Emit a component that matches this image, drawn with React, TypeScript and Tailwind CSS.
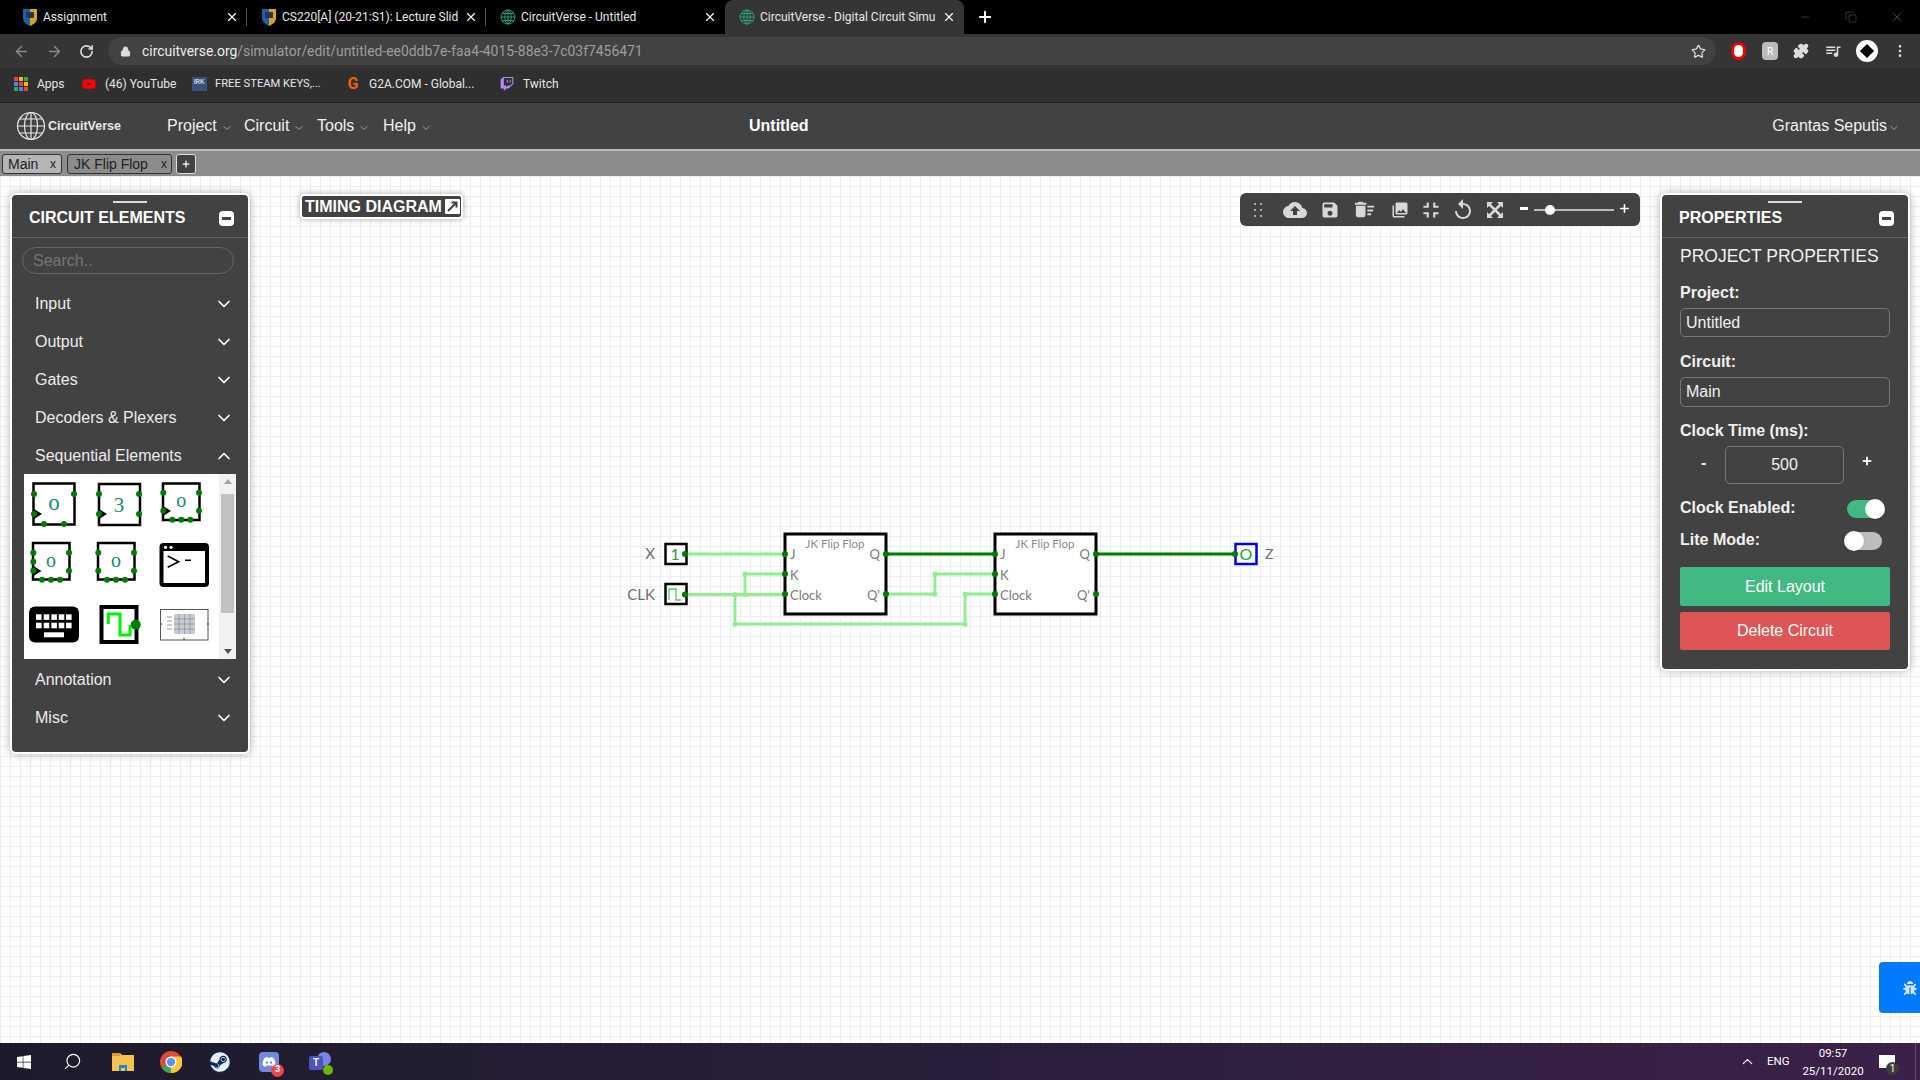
import { ChevronDown, ChevronUp, ArrowLeft, ArrowRight, RotateCw, Lock, Star, Puzzle, X, Plus, Minus, Search, MoreVertical, Copy } from "lucide-react";
import { MdCloudUpload, MdSave, MdDeleteSweep, MdPhotoLibrary, MdFullscreenExit, MdReplay, MdQueueMusic } from "react-icons/md";
import { FaBug, FaDiscord, FaSteam, FaTwitch, FaWindows, FaYoutube } from "react-icons/fa";

const Globe = () => (
  <svg width="16" height="16" viewBox="0 0 16 16" fill="none" stroke="#2f9e78" strokeWidth="1">
    <circle cx="8" cy="8" r="7" />
    <ellipse cx="8" cy="8" rx="3.2" ry="7" />
    <path d="M1 8h14M2 4.5h12M2 11.5h12M8 1v14" />
  </svg>
);

const Shield = () => (
  <svg width="14" height="17" viewBox="0 0 14 17">
    <path d="M0 0h7v17C3 15 0 13 0 9z" fill="#1f5fa8" />
    <path d="M7 0h7v9c0 4-3 6-7 8z" fill="#d9a520" />
    <path d="M3 3h8v6H3z" fill="#29344f" />
  </svg>
);

const BrowserTab = ({ title, icon, active, sep }: { title: string; icon: React.ReactNode; active?: boolean; sep?: boolean }) => (
  <div className={`relative flex h-[34px] w-[239px] shrink-0 items-center pl-[13px] pr-[8px] ${active ? "rounded-t-lg bg-[#353535]" : ""}`}>
    <div className="flex w-[17px] shrink-0 justify-center">{icon}</div>
    <span className="ml-[5px] flex-1 whitespace-nowrap text-xs text-[#e8e8e8]">{title}</span>
    <X size={14} className="shrink-0 text-white" />
    {sep && <div className="absolute right-0 top-[8px] h-[18px] w-px bg-[#555]" />}
  </div>
);

const AppsIcon = () => (
  <div className="grid grid-cols-3 gap-[1.5px]">
    {["#ea4335", "#fbbc05", "#34a853", "#4285f4", "#ea4335", "#fbbc05", "#34a853", "#4285f4", "#ea4335"].map((c, i) => (
      <div key={i} className="h-[3.5px] w-[3.5px]" style={{ background: c }} />
    ))}
  </div>
);

const Bookmark = ({ icon, label, width, small }: { icon: React.ReactNode; label: string; width: string; small?: boolean }) => (
  <div className={`flex shrink-0 items-center ${width}`}>
    <div className="flex w-4 shrink-0 justify-center">{icon}</div>
    <span className={`ml-[8px] whitespace-nowrap text-[#e6e6e6] ${small ? "text-[11.2px]" : "text-xs"}`}>{label}</span>
  </div>
);

const NavMenu = ({ label, width }: { label: string; width: string }) => (
  <div className={`flex shrink-0 items-center ${width}`}>
    <span className="text-base text-[#f0f0f0]">{label}</span>
    <ChevronDown size={12} strokeWidth={1.25} className="ml-[4px] mt-[3px] text-[#cfcfcf]" />
  </div>
);

const CategoryRow = ({ label, open }: { label: string; open?: boolean }) => (
  <div className="flex h-[38px] items-center justify-between pl-[23px] pr-[14px]">
    <span className="text-base text-[#ececec]">{label}</span>
    {open ? <ChevronUp size={20} className="text-white" /> : <ChevronDown size={20} className="text-white" />}
  </div>
);

const MinimizeButton = () => (
  <div className="flex h-[15px] w-[15px] items-center justify-center rounded-sm bg-white">
    <div className="h-[3px] w-[9px] bg-[#424242]" />
  </div>
);

type SeqProps = { x: number; y: number; s: number; nodes: [number, number][]; digit: string; dx: number; dy: number; size: number; clock?: [number, number] };

const SeqIcon = ({ x, y, s, nodes, digit, dx, dy, size, clock }: SeqProps) => (
  <g>
    <rect x={x} y={y} width={s} height={s} fill="#fff" stroke="#000" strokeWidth="2.5" />
    {clock && <path d={`M${clock[0]} ${clock[1] - 5}L${clock[0] + 8} ${clock[1]}L${clock[0]} ${clock[1] + 5}`} fill="#000" />}
    <text x={dx} y={dy} fontSize={size} textAnchor="middle" dominantBaseline="central" fontFamily="'Liberation Serif', serif" fill="#158a78">{digit}</text>
    {nodes.map(([cx, cy], i) => (
      <circle key={i} cx={cx} cy={cy} r="3" fill="#007a00" />
    ))}
  </g>
);

const Palette = () => (
  <svg width="195" height="185" viewBox="0 0 195 185" className="shrink-0">
    <SeqIcon x={9.5} y={9.5} s={41} digit="o" dx={30} dy={28} size={23} clock={[10, 40]} nodes={[[10, 20], [50, 20], [10, 40], [20, 50], [40, 50]]} />
    <SeqIcon x={75} y={10} s={41} digit="3" dx={95} dy={31} size={21} clock={[75, 40]} nodes={[[75, 20], [115, 20], [75, 40], [115, 40]]} />
    <SeqIcon x={139} y={9.5} s={36.5} digit="o" dx={157.3} dy={26} size={20} clock={[139, 37]} nodes={[[139.3, 18.7], [175, 18.7], [139.3, 36.7], [175, 36.7], [148.3, 45.7], [157.3, 45.7], [166.3, 45.7]]} />
    <SeqIcon x={9} y={69} s={36.5} digit="o" dx={27} dy={86} size={20} clock={[9.5, 97]} nodes={[[9.3, 78.7], [9.3, 87.7], [9.3, 96.7], [45, 78.7], [45, 96.7], [18, 105.7], [27, 105.7], [36, 105.7]]} />
    <SeqIcon x={74} y={69} s={36.5} digit="o" dx={92} dy={86} size={20} nodes={[[74.3, 78.7], [74.3, 96.7], [110, 78.7], [110, 96.7], [83, 105.7], [92, 105.7], [101, 105.7]]} />
    <rect x="135.5" y="69" width="49.5" height="44" rx="4" fill="#000" />
    <rect x="139.5" y="77" width="41.5" height="32" fill="#fff" />
    <circle cx="141.5" cy="73.3" r="1.6" fill="#fff" />
    <circle cx="147" cy="73.3" r="1.6" fill="#fff" />
    <path d="M143.7 82L154.7 87.7L143.7 93.3" fill="none" stroke="#000" strokeWidth="1.6" />
    <path d="M161 86.3h6" stroke="#000" strokeWidth="1.6" />
    <rect x="5" y="132.5" width="50" height="36" rx="6" fill="#000" />
    {[12, 19.7, 27.3, 34.7, 42].map((kx) => (
      <g key={kx}>
        <rect x={kx} y="140.3" width="5.6" height="5.6" fill="#fff" />
        <rect x={kx} y="148.7" width="5.6" height="5.6" fill="#fff" />
      </g>
    ))}
    <rect x="20" y="158.3" width="20" height="5" fill="#fff" />
    <rect x="77.5" y="133" width="35" height="35" fill="#fff" stroke="#000" strokeWidth="4" />
    <path d="M84.3 150V140H96V161H106V151" fill="none" stroke="#00f000" strokeWidth="3" />
    <circle cx="111.7" cy="150.7" r="5" fill="#007a00" />
    <rect x="136.5" y="135.5" width="47.5" height="30.5" fill="#fff" stroke="#555" strokeWidth="1" />
    <rect x="150" y="140" width="21" height="20" fill="#c8ccd4" />
    <path d="M155 140v20M160.5 140v20M166 140v20M150 145h21M150 150h21M150 155h21" stroke="#8b8b96" strokeWidth=".7" />
    <path d="M143 143h5M143 147h5M143 151h5M143 155h5" stroke="#9a9aa6" strokeWidth="1.2" />
    <circle cx="160" cy="165" r="1" fill="#00a000" />
    <circle cx="137" cy="150" r="1" fill="#00a000" />
    <circle cx="184" cy="150" r="1" fill="#00a000" />
  </svg>
);

const Wire = ({ d, on }: { d: string; on?: boolean }) => (
  <path d={d} fill="none" stroke={on ? "#007a00" : "#90ee90"} strokeWidth="2.800" />
);

const FlipFlop = ({ x }: { x: number }) => (
  <g fontFamily="Lato, sans-serif" fill="#7a7a7a">
    <rect x={x} y="534" width="101" height="80" fill="#fff" stroke="#000" strokeWidth="3" />
    <text x={x + 50} y="548" fontSize="11.5" textAnchor="middle" fill="#8a8a8a">JK Flip Flop</text>
    <text x={x + 5} y="559" fontSize="13">J</text>
    <text x={x + 5} y="580" fontSize="13">K</text>
    <text x={x + 5} y="600" fontSize="13">Clock</text>
    <text x={x + 95} y="559" fontSize="13" textAnchor="end">Q</text>
    <text x={x + 95} y="600" fontSize="13" textAnchor="end">Q'</text>
    {[[x, 554], [x, 574], [x, 594], [x + 101, 554], [x + 101, 594]].map(([cx, cy], i) => (
      <circle key={i} cx={cx} cy={cy} r="3" fill="#007a00" />
    ))}
  </g>
);

const Circuit = () => (
  <svg width="660" height="130" viewBox="620 515 660 130" className="absolute left-[620px] top-[339px]">
    <Wire d="M685 554H785" />
    <Wire d="M685 594.500H785" />
    <Wire d="M745 574V594M745 574H785" />
    <Wire d="M735 594V624H965V594H995" />
    <Wire d="M885 594H935V574H995" />
    <Wire d="M885 554H995" on />
    <Wire d="M1096 554H1235" on />
    <FlipFlop x={785} />
    <FlipFlop x={995} />
    {[[745, 574], [745, 594.5], [735, 594.5], [735, 624], [965, 624], [965, 594], [935, 594], [935, 574]].map(([cx, cy], i) => (
      <circle key={i} cx={cx} cy={cy} r="2.500" fill="#90ee90" />
    ))}
    <g fontFamily="Lato, sans-serif">
      <text x="655" y="559" fontSize="15" textAnchor="end" fill="#6e6e6e">X</text>
      <text x="655" y="600" fontSize="15" textAnchor="end" fill="#6e6e6e">CLK</text>
      <rect x="665.500" y="544" width="21" height="20" fill="#fff" stroke="#000" strokeWidth="2.500" />
      <text x="675" y="560" fontSize="15" textAnchor="middle" fill="#1f9a3b">1</text>
      <circle cx="685" cy="554" r="3" fill="#007a00" />
      <rect x="665.500" y="584" width="21" height="20" fill="#fff" stroke="#000" strokeWidth="2.500" />
      <path d="M669 600V589H676V600H681" fill="none" stroke="#55c56a" strokeWidth="1.300" />
      <circle cx="685" cy="594.500" r="3" fill="#007a00" />
      <rect x="1235.500" y="544" width="21" height="20" fill="#fff" stroke="#0000e6" strokeWidth="2.500" />
      <text x="1246" y="560" fontSize="16" textAnchor="middle" fill="#1f9a3b">O</text>
      <circle cx="1235" cy="554" r="3" fill="#007a00" />
      <text x="1265" y="559" fontSize="14" fill="#6e6e6e">Z</text>
    </g>
  </svg>
);

const Toggle = ({ on }: { on?: boolean }) => (
  <div className={`relative mt-[2px] h-[18px] w-[35px] rounded-full ${on ? "bg-[#42b983]" : "bg-[#bdbdbd]"}`}>
    <div className={`absolute top-[-1px] h-5 w-5 rounded-full bg-white shadow ${on ? "right-[-3px]" : "left-[-3px]"}`} />
  </div>
);

const ToolSlot = ({ className, children }: { className: string; children: React.ReactNode }) => (
  <div className={`flex w-5 shrink-0 justify-center text-[#d8d8d8] ${className}`}>{children}</div>
);

const Toolbar = () => (
  <div className="absolute left-[1240px] top-[17px] flex h-[33px] w-[400px] items-center rounded-md bg-[#424242]">
    <ToolSlot className="ml-2">
      <div className="grid grid-cols-2 gap-x-[4px] gap-y-[4px]">
        {[0, 1, 2, 3, 4, 5].map((i) => <div key={i} className="h-[2px] w-[2px] bg-[#aaa]" />)}
      </div>
    </ToolSlot>
    <ToolSlot className="ml-[17px]"><MdCloudUpload size={24} className="shrink-0" /></ToolSlot>
    <ToolSlot className="ml-[15px]"><MdSave size={20} className="shrink-0" /></ToolSlot>
    <ToolSlot className="ml-[14px]"><MdDeleteSweep size={23} className="shrink-0" /></ToolSlot>
    <ToolSlot className="ml-[16px]"><MdPhotoLibrary size={18} className="shrink-0" /></ToolSlot>
    <ToolSlot className="ml-[11px]"><MdFullscreenExit size={26} className="shrink-0" /></ToolSlot>
    <ToolSlot className="ml-[12px]"><MdReplay size={24} className="shrink-0" /></ToolSlot>
    <ToolSlot className="ml-[12px]">
      <svg width="16" height="16" viewBox="0 0 16 16" className="shrink-0">
        <path d="M0 0H6L0 6ZM16 0V6L10 0ZM0 16V10L6 16ZM16 16H10L16 10Z" fill="currentColor" />
        <path d="M2 2L14 14M14 2L2 14" stroke="currentColor" strokeWidth="2.500" />
      </svg>
    </ToolSlot>
    <div className="ml-[15px] mb-[2px] h-[3px] w-[8px] bg-white" />
    <div className="relative ml-[6px] h-[2px] w-[80px] bg-[#bbb]">
      <div className="absolute left-[11px] top-[-4px] h-[10px] w-[10px] rounded-full bg-white" />
    </div>
    <Plus size={13} strokeWidth={3} className="mb-[3px] ml-[4px] text-white" />
  </div>
);

export default function App() {
  return (
    <div className="flex h-[1080px] w-[1920px] flex-col overflow-hidden bg-white font-['Liberation_Sans',Arial,sans-serif]">
      <div className="flex h-[34px] shrink-0 items-center bg-black font-['Roboto',sans-serif]">
        <div className="w-[8px] shrink-0" />
        <BrowserTab title="Assignment" icon={<Shield />} sep />
        <BrowserTab title="CS220[A] (20-21:S1): Lecture Slid" icon={<Shield />} sep />
        <BrowserTab title="CircuitVerse - Untitled" icon={<Globe />} />
        <BrowserTab title="CircuitVerse - Digital Circuit Simu" icon={<Globe />} active />
        <Plus size={18} strokeWidth={2.5} className="ml-[12px] text-white" />
        <Minus size={12} strokeWidth={1} className="ml-auto text-[#666]" />
        <Copy size={12} strokeWidth={1} className="ml-[34px] text-[#666]" />
        <X size={14} strokeWidth={1} className="ml-[33px] mr-[16px] text-[#777]" />
      </div>
      <div className="flex h-[34px] shrink-0 items-center bg-[#353535] font-['Roboto',sans-serif]">
        <ArrowLeft size={17} className="ml-[13px] text-[#8a8a8a]" />
        <ArrowRight size={17} className="ml-[16px] text-[#8a8a8a]" />
        <RotateCw size={15} strokeWidth={2.5} className="ml-[16px] text-[#e0e0e0]" />
        <div className="ml-[14px] flex h-7 w-[1608px] items-center rounded-full bg-[#424242] pl-[12px]">
          <Lock size={11} fill="#ddd" className="text-[#ddd]" />
          <span className="ml-[11px] text-[13.9px] text-[#9e9e9e]"><span className="text-[#ececec]">circuitverse.org</span>/simulator/edit/untitled-ee0ddb7e-faa4-4015-88e3-7c03f7456471</span>
          <Star size={15} className="ml-auto mr-[10px] text-[#ddd]" />
        </div>
        <div className="ml-[15px] h-[18px] w-[15px] rounded-full border-[3px] border-[#e00] bg-white" />
        <div className="ml-4 flex h-[18px] w-[16px] items-center justify-center rounded-sm bg-[#bbb] text-[10px] text-white">R</div>
        <Puzzle size={16} fill="#ddd" className="ml-[15px] text-[#ddd]" />
        <MdQueueMusic size={18} className="ml-[15px] text-[#ddd]" />
        <div className="ml-[14px] flex h-[22px] w-[22px] items-center justify-center rounded-full bg-white"><div className="h-[10px] w-[10px] rotate-45 bg-black" /></div>
        <MoreVertical size={16} className="ml-[14px] text-[#ddd]" />
      </div>
      <div className="flex h-[35px] shrink-0 items-center border-b border-[#1f1f1f] bg-[#2f2f2f] pb-[2px] pl-[13px] font-['Roboto',sans-serif]">
        <Bookmark width="w-[68px]" label="Apps" icon={<AppsIcon />} />
        <Bookmark width="w-[110px]" label="(46) YouTube" icon={<FaYoutube size={14} className="text-[#f00]" />} />
        <Bookmark width="w-[154px]" small label="FREE STEAM KEYS,..." icon={<div className="h-[14px] w-[15px] bg-[#3c4f7c] text-center text-[7px] text-white">IRK</div>} />
        <Bookmark width="w-[154px]" label="G2A.COM - Global..." icon={<span className="text-base font-bold leading-4 text-[#f05f00]">G</span>} />
        <Bookmark width="w-[60px]" label="Twitch" icon={<FaTwitch size={14} className="text-[#b58aff]" />} />
      </div>
      <div className="flex h-[46px] shrink-0 items-center bg-[#424242] pl-4">
        <svg width="30" height="30" viewBox="0 0 30 30" fill="none" stroke="#e8e8e8" strokeWidth="1.2" className="shrink-0">
          <circle cx="15" cy="15" r="13.500" />
          <ellipse cx="15" cy="15" rx="6.500" ry="13.500" />
          <path d="M1.500 15H28.500M3.500 8H26.500M3.500 22H26.500M15 1.500V28.500" />
        </svg>
        <span className="ml-[2px] w-[119px] shrink-0 text-[12.5px] font-bold text-[#e8e8e8]">CircuitVerse</span>
        <NavMenu width="w-[77px]" label="Project" />
        <NavMenu width="w-[73px]" label="Circuit" />
        <NavMenu width="w-[66px]" label="Tools" />
        <NavMenu width="w-[366px]" label="Help" />
        <span className="text-base font-bold text-white">Untitled</span>
        <div className="ml-auto mr-[20px] flex items-center">
          <span className="text-base text-[#f0f0f0]">Grantas Seputis</span>
          <ChevronDown size={12} strokeWidth={1.25} className="ml-[1px] mt-[3px] text-[#cfcfcf]" />
        </div>
      </div>
      <div className="flex h-[27px] shrink-0 items-center border-t-2 border-[#bbb] bg-[#8c8c8c] pl-[2px]">
        <div className="flex h-5 w-[60px] items-center justify-between rounded-[3px] border border-[#333] bg-[#b5b5b5] px-[5px] text-sm text-[#222]">
          <span>Main</span><span className="text-xs">x</span>
        </div>
        <div className="ml-[5px] flex h-5 w-[105px] items-center justify-between rounded-[3px] border border-[#333] bg-[#8c8c8c] pl-[6px] pr-[4px] text-sm text-[#222]">
          <span>JK Flip Flop</span><span className="text-xs">x</span>
        </div>
        <div className="ml-[4px] flex h-5 w-[20px] items-center justify-center rounded-[3px] border border-[#ddd] bg-[#424242]">
          <Plus size={10} strokeWidth={3} className="text-white" />
        </div>
      </div>
      <div className="relative flex-1 bg-white bg-[linear-gradient(#eeeeee_1px,transparent_1px),linear-gradient(90deg,#eeeeee_1px,transparent_1px)] bg-[size:10px_10px]">
        <div className="absolute left-[10px] top-[17px] h-[561px] w-[240px] rounded-[6px] border-2 border-white bg-[#424242] shadow-[0_0_10px_rgba(0,0,0,0.3)]">
          <div className="relative flex h-[43px] items-center justify-between border-b border-[#666] pl-[17px] pr-[14px]">
            <div className="absolute left-[101px] top-[6px] h-[2px] w-[34px] bg-[#ddd]" />
            <span className="mt-[4px] text-base font-bold text-white">CIRCUIT ELEMENTS</span>
            <div className="mt-[4px]"><MinimizeButton /></div>
          </div>
          <div className="mx-[10px] mt-[9px] flex h-[27px] w-[212px] items-center rounded-full border border-[#666] pl-[10px]">
            <input readOnly placeholder="Search.." className="w-full bg-transparent text-base outline-none placeholder:text-[#757575]" />
          </div>
          <div className="mt-[11px]">
            <CategoryRow label="Input" />
            <CategoryRow label="Output" />
            <CategoryRow label="Gates" />
            <CategoryRow label="Decoders & Plexers" />
            <CategoryRow label="Sequential Elements" open />
          </div>
          <div className="mx-[12px] -mt-px flex h-[185px] w-[212px] bg-white">
            <Palette />
            <div className="flex w-[17px] shrink-0 flex-col items-center justify-between bg-[#f1f1f1] py-[5px]">
              <div className="h-0 w-0 border-x-[4px] border-b-[5px] border-x-transparent border-b-[#a3a3a3]" />
              <div className="absolute top-[299px] h-[119px] w-[13px] bg-[#c1c1c1]" />
              <div className="h-0 w-0 border-x-[4px] border-t-[5px] border-x-transparent border-t-[#505050]" />
            </div>
          </div>
          <div className="mt-[2px]">
            <CategoryRow label="Annotation" />
            <CategoryRow label="Misc" />
          </div>
        </div>

        <div className="absolute left-[300px] top-[18px] flex h-[25px] w-[163px] items-center justify-between rounded-[4px] border-2 border-white bg-[#424242] pl-[3px] pr-[1px] shadow-[0_0_6px_rgba(0,0,0,0.35)]">
          <span className="text-base font-bold text-white">TIMING DIAGRAM</span>
          <svg width="15" height="15" viewBox="0 0 15 15" className="shrink-0">
            <rect width="15" height="15" rx="1" fill="#fff" />
            <path d="M3 12L10.500 4.500M6.500 3.500H11.500V8.500" fill="none" stroke="#424242" strokeWidth="2" />
          </svg>
        </div>

        <Toolbar />
        <Circuit />

        <div className="absolute left-[1660px] top-[17px] h-[478px] w-[250px] rounded-[6px] border-2 border-white bg-[#424242] shadow-[0_0_10px_rgba(0,0,0,0.3)]">
          <div className="relative flex h-[43px] items-center justify-between border-b border-[#666] pl-[17px] pr-[14px]">
            <div className="absolute left-[106px] top-[6px] h-[2px] w-[34px] bg-[#ddd]" />
            <span className="mt-[4px] text-base font-bold text-white">PROPERTIES</span>
            <div className="mt-[4px]"><MinimizeButton /></div>
          </div>
          <div className="px-[18px] text-[#f0f0f0]">
            <div className="mt-[6px] h-6 text-[17.500px] leading-6">PROJECT PROPERTIES</div>
            <div className="mt-[15px] h-5 text-base font-bold leading-5">Project:</div>
            <input readOnly value="Untitled" className="mt-[5px] h-[29px] w-[210px] rounded-[5px] border border-[#777] bg-transparent px-[5px] text-base outline-none" />
            <div className="mt-[15px] h-5 text-base font-bold leading-5">Circuit:</div>
            <input readOnly value="Main" className="mt-[5px] h-[30px] w-[210px] rounded-[5px] border border-[#777] bg-transparent px-[5px] text-base outline-none" />
            <div className="mt-[14px] h-5 text-base font-bold leading-5">Clock Time (ms):</div>
            <div className="mt-[5px] flex h-[38px] items-center">
              <span className="ml-[21px] mb-1 w-6 text-base font-bold">-</span>
              <input readOnly value="500" className="h-[38px] w-[119px] rounded-[5px] border border-[#777] bg-transparent text-center text-base outline-none" />
              <Plus size={12} strokeWidth={4} className="mb-2 ml-[17px]" />
            </div>
            <div className="mt-[14px] flex h-5 items-center justify-between pr-2 text-base font-bold"><span>Clock Enabled:</span><Toggle on /></div>
            <div className="mt-3 flex h-5 items-center justify-between pr-2 text-base font-bold"><span>Lite Mode:</span><Toggle /></div>
            <div className="mt-[17px] flex h-[39px] items-center justify-center rounded-[2px] bg-[#42b983] text-base text-white">Edit Layout</div>
            <div className="mt-[6px] flex h-[38px] items-center justify-center rounded-[2px] bg-[#dc5656] text-base text-white">Delete Circuit</div>
          </div>
        </div>

        <div className="absolute bottom-[30px] right-0 flex h-[51px] w-[41px] items-center justify-end rounded-l-[4px] bg-[#007bff] pr-[3px]">
          <FaBug size={14} className="text-[#d8e8ff]" />
        </div>
      </div>
      <div className="flex h-[37px] shrink-0 items-center bg-[linear-gradient(90deg,#1d1b2b,#2a1f3a_50%,#3b2149)] font-['Roboto',sans-serif] text-white">
        <FaWindows size={16} className="ml-4" />
        <Search size={19} strokeWidth={1.5} className="ml-[31px] -scale-x-100" />
        <svg width="22" height="18" viewBox="0 0 22 18" className="ml-[30px]">
          <path d="M0 0h8l2 2h12v16H0z" fill="#f5c24c" />
          <path d="M0 0h8v3H0z" fill="#d99a26" />
          <path d="M7 12h8v6h-2v-3H9v3H7z" fill="#1e88d8" />
        </svg>
        <svg width="22" height="22" viewBox="0 0 22 22" className="ml-[26px]">
          <circle cx="11" cy="11" r="11" fill="#dd4b3e" />
          <path d="M11 11L1.500 16.500A11 11 0 0 0 14 21.600z" fill="#3aa757" />
          <path d="M11 5.500H21A11 11 0 0 1 11 22z" fill="#fcc934" />
          <circle cx="11" cy="11" r="5.500" fill="#fff" />
          <circle cx="11" cy="11" r="4.200" fill="#5c92f5" />
        </svg>
        <div className="ml-[27px] flex h-[22px] w-[22px] items-center justify-center rounded-full bg-[#0f2a50]"><FaSteam size={20} className="text-[#e6eef6]" /></div>
        <div className="relative ml-[28px] flex h-[20px] w-[20px] items-center justify-center rounded-[4px] bg-[#7289da]">
          <FaDiscord size={14} />
          <div className="absolute -bottom-[5px] -right-[5px] flex h-[13px] w-[13px] items-center justify-center rounded-full bg-[#e8474c] text-[9px] font-bold">3</div>
        </div>
        <div className="relative ml-[30px] flex h-[20px] w-[22px] items-center justify-center">
          <div className="absolute right-0 top-0 h-[14px] w-[14px] rounded-full bg-[#7b83eb]" />
          <div className="absolute bottom-[2px] left-0 flex h-[14px] w-[14px] items-center justify-center rounded-[2px] bg-[#4b53bc] text-[10px] font-bold">T</div>
          <div className="absolute -bottom-[3px] -right-[2px] h-[10px] w-[10px] rounded-full bg-[#6bb700]" />
        </div>
        <ChevronUp size={17} strokeWidth={1.5} className="ml-auto" />
        <span className="ml-[11px] w-[24px] text-[11.500px]">ENG</span>
        <div className="ml-[12px] flex w-[60px] flex-col items-center text-[11.500px] leading-[18px]">
          <span>09:57</span>
          <span>25/11/2020</span>
        </div>
        <div className="relative ml-[16px] h-[13px] w-[16px] bg-white">
          <div className="absolute -bottom-[7px] left-[7px] flex h-[13px] w-[13px] items-center justify-center rounded-full bg-[#3c3c3c] text-[10px]">1</div>
        </div>
        <div className="ml-[20px] h-full w-px bg-[#5a4a66]" />
        <div className="w-[4px]" />
      </div>
    </div>
  );
}
